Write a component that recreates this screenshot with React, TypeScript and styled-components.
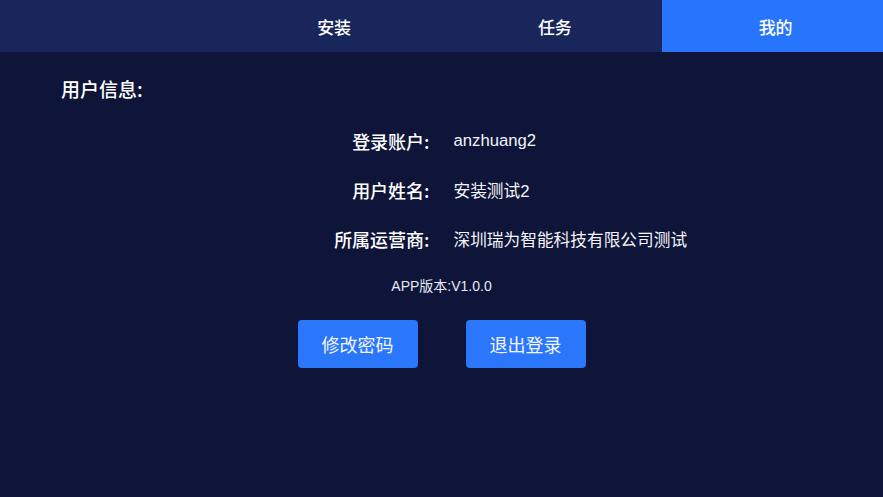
import React from 'react';
import styled, { createGlobalStyle } from 'styled-components';

const GlobalStyle = createGlobalStyle`
	html, body {
		margin: 0;
		padding: 0;
		background-color: #0e1539;
	}
	body {
		font-family: "Liberation Sans", "Noto Sans CJK SC", sans-serif;
		color: #fff;
	}
`;

const Page = styled.div`
	width: 100vw;
	height: 100vh;
	background-color: #0e1539;
	display: flex;
	flex-direction: column;
`;

const TopBar = styled.div`
	height: 52px;
	background-color: #19265b;
	display: grid;
	grid-template-columns: repeat(4, 1fr);
`;

const Tab = styled.div<{ $active?: boolean }>`
	display: flex;
	align-items: center;
	justify-content: center;
	padding-left: 6px;
	font-family: "Noto Sans CJK SC", sans-serif;
	font-size: 17px;
	font-weight: 500;
	color: #fff;
	background-color: ${(p) => (p.$active ? '#2775fd' : 'transparent')};
	cursor: pointer;
`;

const Content = styled.div`
	padding: 23px 0 0 0;
	display: flex;
	flex-direction: column;
`;

const SectionTitle = styled.h2`
	margin: 0 0 0 61px;
	height: 28px;
	line-height: 28px;
	font-family: "Noto Sans CJK SC", sans-serif;
	font-size: 19px;
	font-weight: 500;
`;

const InfoList = styled.div`
	margin-top: 13px;
	display: grid;
	grid-template-columns: 1fr 1fr;
	column-gap: 24px;
	grid-auto-rows: 49px;
	align-items: center;
`;

const Label = styled.div`
	text-align: right;
	font-family: "Noto Sans CJK SC", sans-serif;
	font-size: 18px;
	font-weight: 500;
`;

const Value = styled.div`
	text-align: left;
	font-family: "Liberation Sans", "Noto Sans CJK SC", sans-serif;
	font-size: 16.7px;
	color: #f2f4fa;
`;

const Version = styled.div`
	margin-top: 12px;
	text-align: center;
	font-family: "Liberation Sans", "Noto Sans CJK SC", sans-serif;
	font-size: 14px;
	color: #e6e9f2;
`;

const Actions = styled.div`
	margin-top: 25px;
	display: flex;
	justify-content: center;
	gap: 48px;
`;

const Button = styled.button`
	width: 120px;
	height: 48px;
	border: none;
	border-radius: 4px;
	background-color: #2a77fc;
	color: #f4f6fc;
	font-family: "Noto Sans CJK SC", sans-serif;
	font-size: 18px;
	cursor: pointer;
`;

const info = [
	{ label: '登录账户:', value: 'anzhuang2' },
	{ label: '用户姓名:', value: '安装测试2' },
	{ label: '所属运营商:', value: '深圳瑞为智能科技有限公司测试' },
];

export default function App() {
	return (
		<Page>
			<GlobalStyle />
			<TopBar>
				<div />
				<Tab>安装</Tab>
				<Tab>任务</Tab>
				<Tab $active>我的</Tab>
			</TopBar>
			<Content>
				<SectionTitle>用户信息:</SectionTitle>
				<InfoList>
					{info.map((row) => (
						<React.Fragment key={row.label}>
							<Label>{row.label}</Label>
							<Value>{row.value}</Value>
						</React.Fragment>
					))}
				</InfoList>
				<Version>APP版本:V1.0.0</Version>
				<Actions>
					<Button>修改密码</Button>
					<Button>退出登录</Button>
				</Actions>
			</Content>
		</Page>
	);
}
